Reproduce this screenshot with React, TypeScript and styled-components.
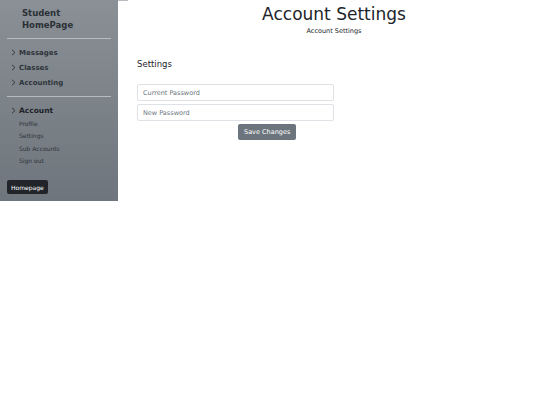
import React from "react";
import styled, { createGlobalStyle } from "styled-components";

const Global = createGlobalStyle`
  html, body { margin: 0; padding: 0; background: #fff; }
  body { font-family: "DejaVu Sans", Verdana, sans-serif; color: #212529; }
`;

const Page = styled.div`
  display: flex;
  align-items: flex-start;
  width: 540px;
`;

const Sidebar = styled.nav`
  width: 118px;
  height: 201px;
  box-sizing: border-box;
  background: linear-gradient(180deg, #8a9096 0%, #6e757c 100%);
  padding: 7px 7px 0 7px;
  display: flex;
  flex-direction: column;
  position: relative;
  &::after {
    content: "";
    position: absolute;
    top: 0;
    left: 118px;
    width: 10px;
    height: 1px;
    background: #b8bcc0;
  }
`;

const Brand = styled.div`
  font-weight: bold;
  font-size: 8.5px;
  line-height: 12px;
  color: #2b3036;
  padding-left: 15px;
  padding-bottom: 7px;
  border-bottom: 1.5px solid #b7bbbf;
`;

const NavList = styled.ul<{ $divider?: boolean }>`
  list-style: none;
  margin: 0;
  padding: 6px 0 ${(p) => (p.$divider ? "6px" : "0")} 0;
  border-bottom: ${(p) => (p.$divider ? "1.5px solid #b7bbbf" : "none")};
`;

const NavItem = styled.li<{ $active?: boolean }>`
  display: flex;
  align-items: center;
  height: 15px;
  padding-left: 4px;
  font-size: ${(p) => (p.$active ? "7.5px" : "7px")};
  font-weight: bold;
  color: ${(p) => (p.$active ? "#1f2327" : "#2e343a")};
  gap: 1px;
`;

const Chevron = styled.span`
  display: inline-flex;
  width: 7px;
`;

const SubList = styled.ul`
  list-style: none;
  margin: 0;
  padding: 0 0 0 12px;
`;

const SubItem = styled.li`
  font-size: 6px;
  height: 12.3px;
  line-height: 12px;
  color: #2f353b;
`;

const HomeButton = styled.button`
  margin-top: 13px;
  align-self: flex-start;
  background: #212529;
  color: #fff;
  border: none;
  border-radius: 2px;
  font-family: "DejaVu Sans", Verdana, sans-serif;
  font-size: 6px;
  padding: 0 4px;
  height: 14px;
`;

const Main = styled.main`
  flex: 1;
  padding-left: 10px;
  display: flex;
  flex-direction: column;
`;

const Header = styled.header`
  display: flex;
  flex-direction: column;
  align-items: center;
  padding-top: 3px;
`;

const Title = styled.h1`
  margin: 0;
  font-weight: normal;
  font-size: 17px;
  line-height: 22px;
  color: #212529;
`;

const Subtitle = styled.div`
  font-size: 6.5px;
  line-height: 10px;
  margin-top: 1px;
  color: #212529;
`;

const Section = styled.section`
  padding: 22px 9px 0 9px;
  display: flex;
  flex-direction: column;
`;

const SectionTitle = styled.h2`
  margin: 0 0 14px 0;
  font-weight: normal;
  font-size: 8.5px;
  line-height: 12px;
  color: #212529;
`;

const Form = styled.form`
  display: flex;
  flex-direction: column;
  gap: 3px;
  width: 197px;
`;

const Input = styled.input`
  box-sizing: border-box;
  width: 197px;
  height: 17px;
  border: 1px solid #dee2e6;
  border-radius: 2px;
  padding: 0 5px;
  font-family: "DejaVu Sans", Verdana, sans-serif;
  font-size: 6.5px;
  color: #212529;
  &::placeholder { color: #6c757d; }
`;

const SaveButton = styled.button`
  align-self: flex-start;
  margin-left: 101px;
  margin-top: 0;
  height: 16px;
  padding: 0 6px;
  background: #6c757d;
  color: #fff;
  border: none;
  border-radius: 2px;
  font-family: "DejaVu Sans", Verdana, sans-serif;
  font-size: 6.5px;
`;

const ChevronIcon = () => (
  <svg width="5" height="7" viewBox="0 0 5 7">
    <path d="M1 0.8 L4 3.5 L1 6.2" fill="none" stroke="#2b3036" strokeWidth="0.9" />
  </svg>
);

export default function App() {
  return (
    <>
      <Global />
      <Page>
        <Sidebar>
          <Brand>
            Student
            <br />
            HomePage
          </Brand>
          <NavList $divider>
            {["Messages", "Classes", "Accounting"].map((t) => (
              <NavItem key={t}>
                <Chevron><ChevronIcon /></Chevron>
                {t}
              </NavItem>
            ))}
          </NavList>
          <NavList>
            <NavItem $active>
              <Chevron><ChevronIcon /></Chevron>
              Account
            </NavItem>
          </NavList>
          <SubList>
            {["Profile", "Settings", "Sub Accounts", "Sign out"].map((t) => (
              <SubItem key={t}>{t}</SubItem>
            ))}
          </SubList>
          <HomeButton>Homepage</HomeButton>
        </Sidebar>
        <Main>
          <Header>
            <Title>Account Settings</Title>
            <Subtitle>Account Settings</Subtitle>
          </Header>
          <Section>
            <SectionTitle>Settings</SectionTitle>
            <Form onSubmit={(e) => e.preventDefault()}>
              <Input type="password" placeholder="Current Password" />
              <Input type="password" placeholder="New Password" />
              <SaveButton type="submit">Save Changes</SaveButton>
            </Form>
          </Section>
        </Main>
      </Page>
    </>
  );
}
